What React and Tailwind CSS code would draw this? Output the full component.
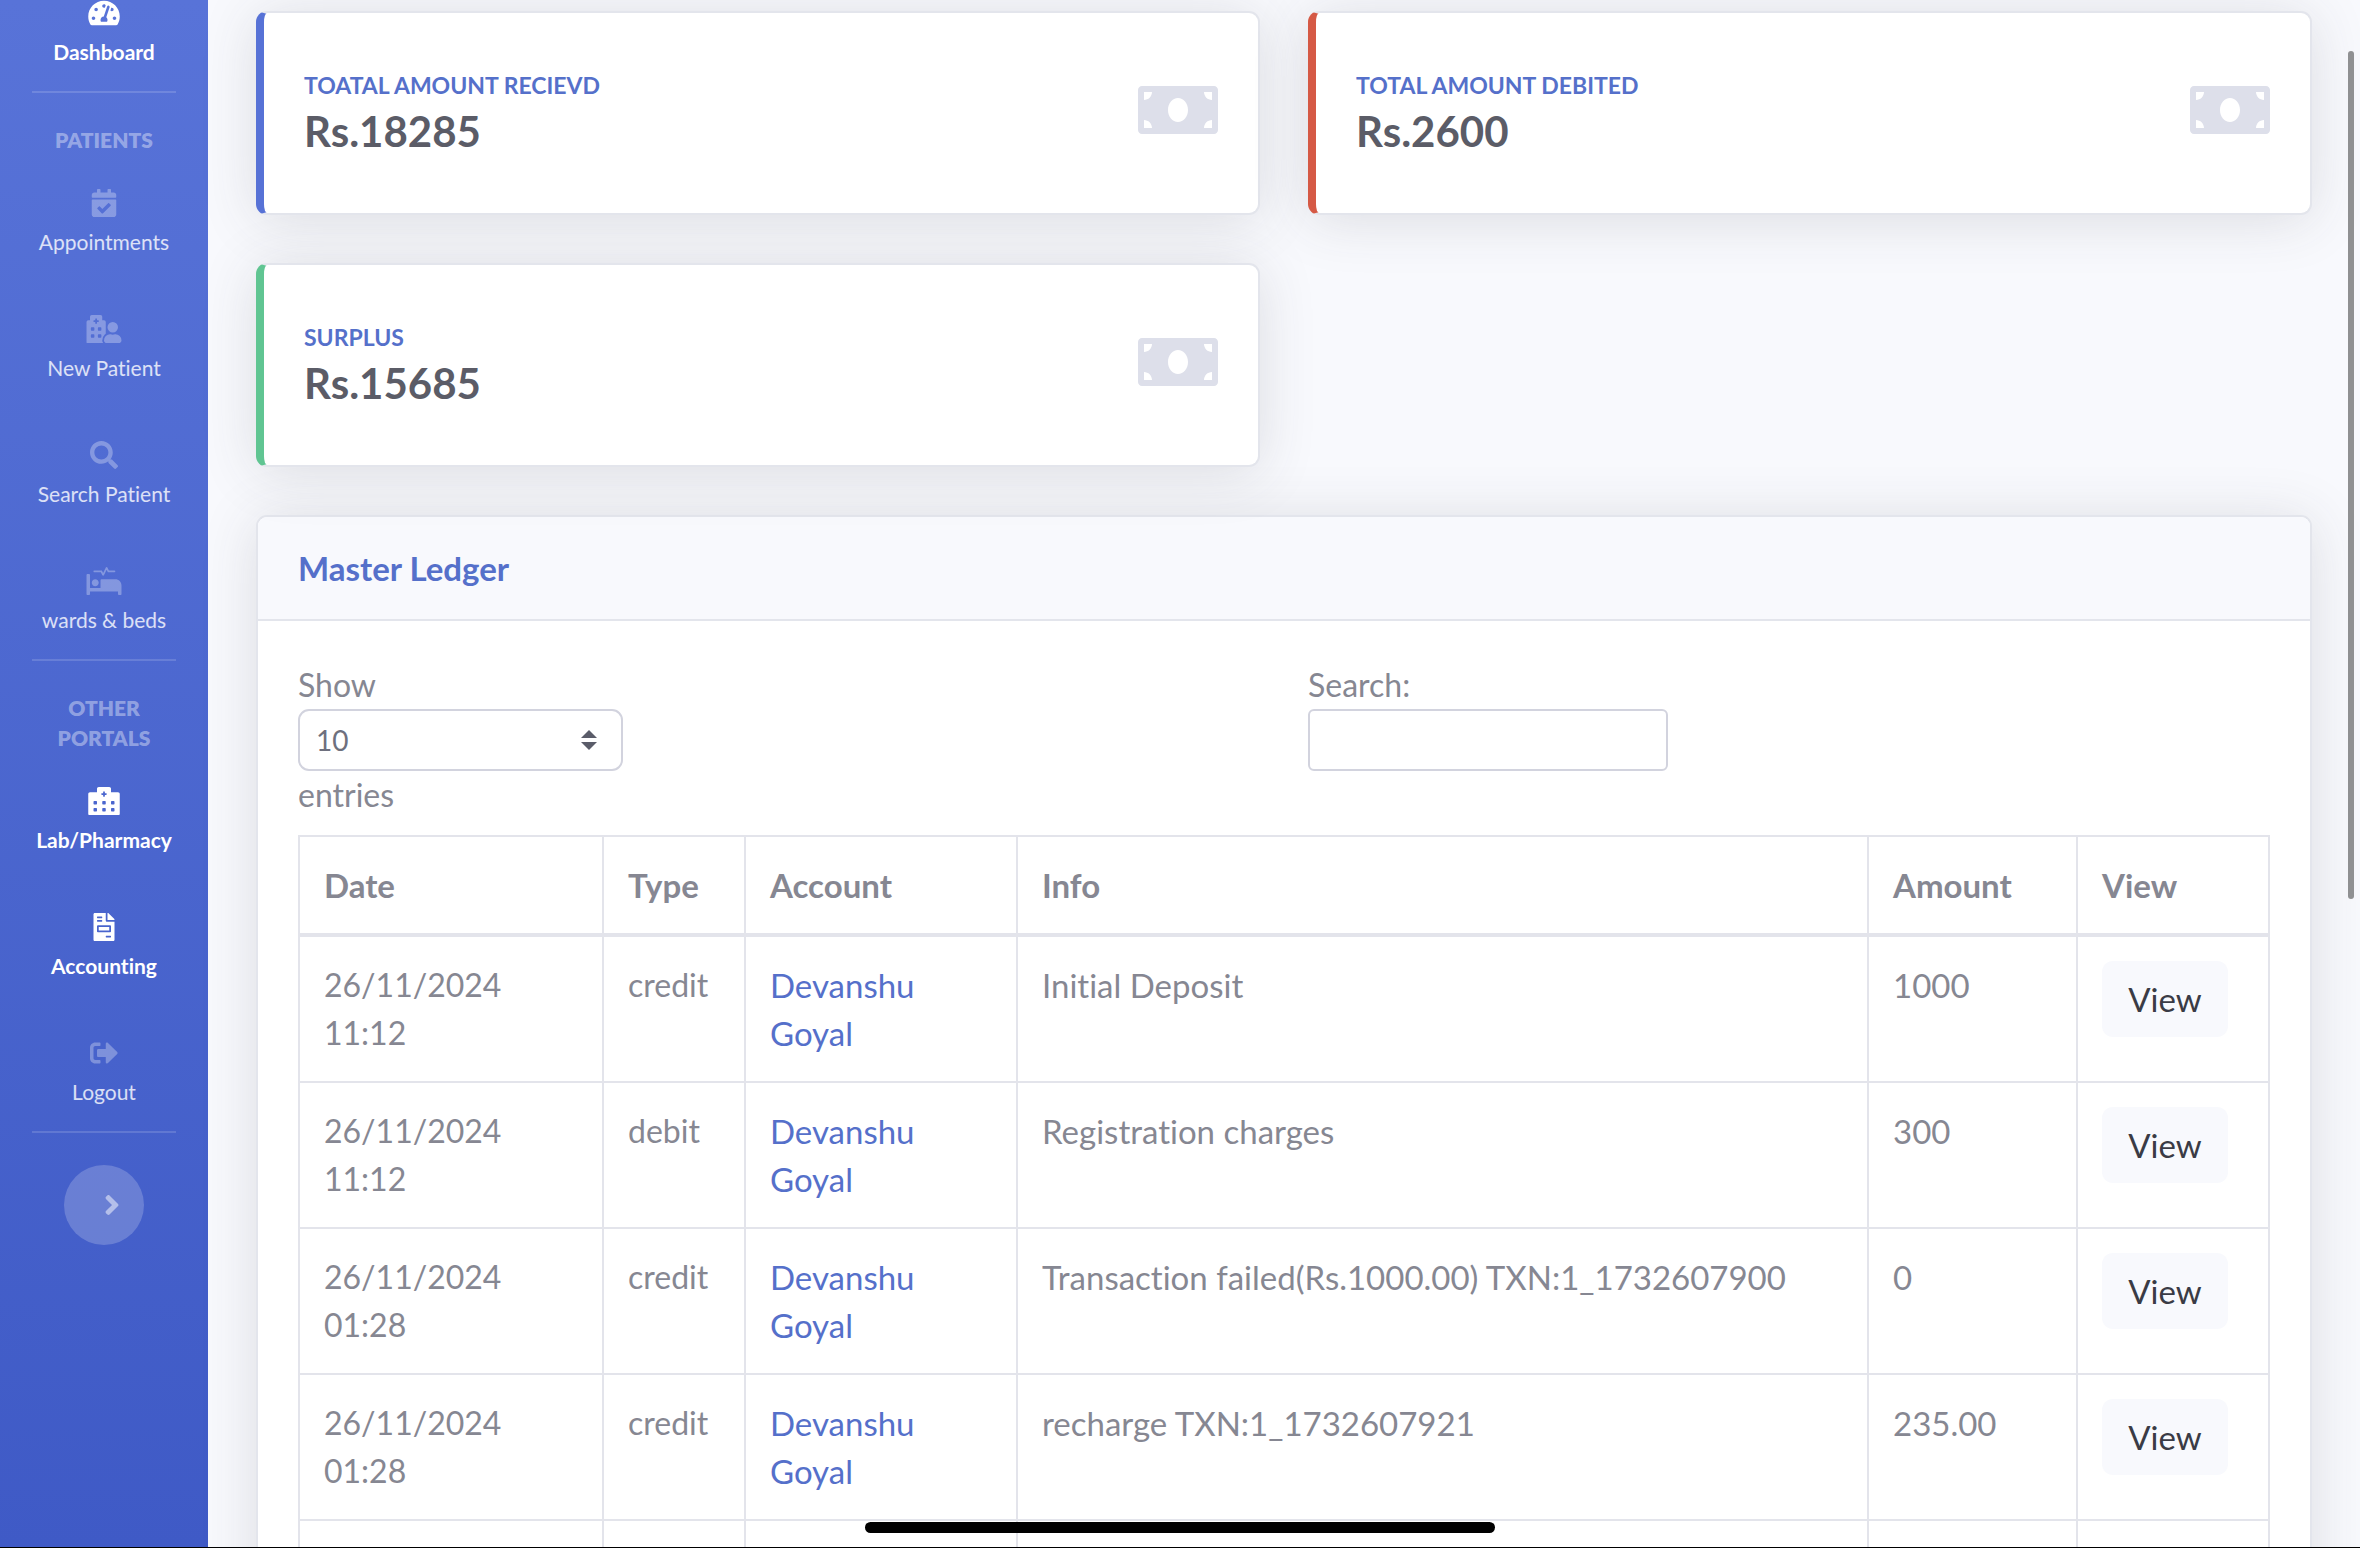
import React from 'react';
import {
  FaAngleRight,
  FaCalendarCheck,
  FaFileInvoice,
  FaHospitalAlt,
  FaHospitalUser,
  FaMoneyBill,
  FaProcedures,
  FaSearch,
  FaSignOutAlt,
  FaTachometerAlt,
} from 'react-icons/fa';

const patientLinks = [
  { icon: FaCalendarCheck, label: 'Appointments' },
  { icon: FaHospitalUser, label: 'New Patient' },
  { icon: FaSearch, label: 'Search Patient' },
  { icon: FaProcedures, label: 'wards & beds' },
];

const portalLinks = [
  { icon: FaHospitalAlt, label: 'Lab/Pharmacy', active: true },
  { icon: FaFileInvoice, label: 'Accounting', active: true },
  { icon: FaSignOutAlt, label: 'Logout' },
];

const rows = [
  { date: '26/11/2024 11:12', type: 'credit', account: 'Devanshu Goyal', info: 'Initial Deposit', amount: '1000' },
  { date: '26/11/2024 11:12', type: 'debit', account: 'Devanshu Goyal', info: 'Registration charges', amount: '300' },
  { date: '26/11/2024 01:28', type: 'credit', account: 'Devanshu Goyal', info: 'Transaction failed(Rs.1000.00) TXN:1_1732607900', amount: '0' },
  { date: '26/11/2024 01:28', type: 'credit', account: 'Devanshu Goyal', info: 'recharge TXN:1_1732607921', amount: '235.00' },
];

const NavItem = ({ icon: Icon, label, active }) => (
  <a href="#" className={`flex flex-col items-center py-6 text-[21px] leading-[30px] whitespace-nowrap ${active ? 'font-bold text-white' : 'text-white/80'}`}>
    <span className="flex h-12 items-center">
      <Icon className={`h-7 w-9 ${active ? 'text-white' : 'text-white/30'}`} />
    </span>
    {label}
  </a>
);

const Divider = () => <hr className="mx-8 mb-8 border-t-2 border-white/15" />;

const NavHeading = ({ children }) => (
  <div className="px-8 text-center text-[21px] leading-[30px] font-extrabold text-white/40 uppercase">{children}</div>
);

const Sidebar = () => (
  <nav className="w-52 shrink-0 bg-linear-to-b from-[#5873d8] to-[#3f5ac6]">
    {/* scrolled a little way down */}
    <div className="-mt-[35px]">
      <NavItem icon={FaTachometerAlt} label="Dashboard" active />
      <Divider />
      <NavHeading>Patients</NavHeading>
      {patientLinks.map((link) => <NavItem key={link.label} {...link} />)}
      <Divider />
      <NavHeading>Other Portals</NavHeading>
      {portalLinks.map((link) => <NavItem key={link.label} {...link} />)}
      <Divider />
      <button type="button" aria-label="Toggle sidebar" className="mx-auto flex size-20 items-center justify-center rounded-full bg-white/20 pl-4 text-white/50">
        <FaAngleRight size={32} />
      </button>
    </div>
  </nav>
);

const accents = {
  blue: 'border-l-[#5772d6]',
  red: 'border-l-[#d55945]',
  green: 'border-l-[#60c592]',
};

const StatCard = ({ label, value, accent }) => (
  <div className={`flex items-center justify-between rounded-[11px] border-2 border-l-8 border-[#e3e5ec] bg-white px-10 py-14 shadow-[0_5px_56px_rgba(58,59,69,0.15)] ${accents[accent]}`}>
    <div>
      <div className="mb-1 text-[23px] leading-[32px] font-bold text-[#5570ca] uppercase">{label}</div>
      <div className="text-[42px] leading-[52px] font-bold text-[#5b5c67]">{value}</div>
    </div>
    <FaMoneyBill className="mb-1.5 h-16 w-20 text-[#dddfea]" />
  </div>
);

const Filters = () => (
  <div className="grid grid-cols-2 gap-12">
    <label className="block leading-[48px]">
      Show
      <span className="relative block h-[62px] w-[325px]">
        <select className="block h-full w-full appearance-none rounded-[11px] border-2 border-[#d2d3de] bg-white px-4 text-[28px] leading-[42px] text-[#6e707e]" defaultValue="10">
          <option>10</option>
          <option>25</option>
          <option>50</option>
          <option>100</option>
        </select>
        <svg viewBox="0 0 4 5" className="pointer-events-none absolute top-[21px] right-[26px] h-5 w-4" fill="#5a5c69">
          <path d="M2 0L0 2h4zm0 5L0 3h4z" />
        </svg>
      </span>
      entries
    </label>
    <label className="block leading-[48px]">
      Search:
      <input type="search" className="block h-[62px] w-[360px] rounded-[6px] border-2 border-[#d2d3de] bg-white px-4 text-[28px]" />
    </label>
  </div>
);

const cell = 'border-2 border-[#e3e4eb] p-6 align-top';

const Ledger = () => (
  <section className="mt-12 rounded-[11px] border-2 border-[#e3e5ec] bg-white shadow-[0_5px_56px_rgba(58,59,69,0.15)]">
    <header className="rounded-t-[9px] border-b-2 border-[#e3e5ec] bg-[#f8f9fd] px-10 py-8">
      <h6 className="text-[33px] leading-[38px] font-bold text-[#5570ca]">Master Ledger</h6>
    </header>
    <div className="p-10">
      <Filters />
      <table className="mt-4 w-full table-fixed border-collapse text-left text-[33px] leading-[48px]">
        <thead>
          <tr>
            <th className={`${cell} w-[304px] border-b-4`}>Date</th>
            <th className={`${cell} w-[142px] border-b-4`}>Type</th>
            <th className={`${cell} w-[272px] border-b-4`}>Account</th>
            <th className={`${cell} border-b-4`}>Info</th>
            <th className={`${cell} w-[209px] border-b-4`}>Amount</th>
            <th className={`${cell} w-[192px] border-b-4`}>View</th>
          </tr>
        </thead>
        <tbody>
          {rows.map((row, i) => (
            <tr key={i}>
              <td className={`${cell} text-[32px]`}>{row.date}</td>
              <td className={`${cell} text-[32px]`}>{row.type}</td>
              <td className={cell}><a href="#" className="text-[#5570ca]">{row.account}</a></td>
              <td className={cell}>{row.info}</td>
              <td className={cell}>{row.amount}</td>
              <td className={cell}>
                <button type="button" className="block w-[126px] rounded-[11px] bg-[#f8f9fd] py-3.5 leading-[48px] text-[#3a3b45]">View</button>
              </td>
            </tr>
          ))}
          <tr className="h-36">
            {[0, 1, 2, 3, 4, 5].map((i) => <td key={i} className={cell}></td>)}
          </tr>
        </tbody>
      </table>
    </div>
  </section>
);

export default function App() {
  return (
    <div className="relative flex h-screen overflow-hidden bg-[#f8f9fd] font-['Lato',sans-serif] text-[32px] text-[#868792] [font-variant-ligatures:none]">
      <Sidebar />
      <main className="min-w-0 flex-1 px-12 pt-[11px]">
        <div className="grid grid-cols-2 gap-12">
          <StatCard label="Toatal Amount Recievd" value="Rs.18285" accent="blue" />
          <StatCard label="Total Amount Debited" value="Rs.2600" accent="red" />
          <StatCard label="Surplus" value="Rs.15685" accent="green" />
        </div>
        <Ledger />
      </main>

      {/* scroll thumb, home indicator and screen edge */}
      <div className="absolute top-[51px] right-1.5 h-[848px] w-1.5 rounded-full bg-[#8f9092]"></div>
      <div className="absolute bottom-[15px] left-1/2 h-[11px] w-[630px] -translate-x-1/2 rounded-full bg-black"></div>
      <div className="absolute inset-x-0 bottom-0 h-px bg-black"></div>
    </div>
  );
}
